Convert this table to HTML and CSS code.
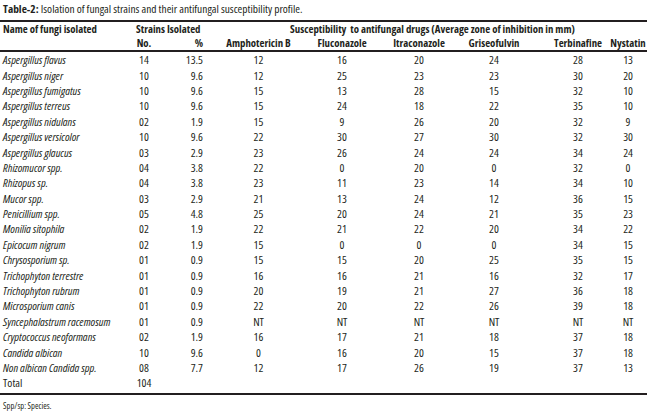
FILE: index.html
```html
<!DOCTYPE html>
<html>
<head>
<meta charset="utf-8">
<link rel="stylesheet" href="styles.css">
</head>
<body>
<p class="caption"><b>Table-2:</b> Isolation of fungal strains and their antifungal susceptibility profile.</p>
<table class="data">
<colgroup>
<col class="c-name"><col class="c-no"><col class="c-pct"><col class="c-amp"><col class="c-flu"><col class="c-itr"><col class="c-gri"><col class="c-ter"><col class="c-nys">
</colgroup>
<thead>
<tr class="h1">
<th class="name">Name of fungi isolated</th>
<th colspan="2" class="strains">Strains Isolated</th>
<th colspan="6" class="susc">Susceptibility&nbsp; to antifungal drugs (Average zone of inhibition in mm)</th>
</tr>
<tr class="h2">
<th></th>
<th>No.</th>
<th class="pct">%</th>
<th>Amphotericin B</th>
<th>Fluconazole</th>
<th>Itraconazole</th>
<th>Griseofulvin</th>
<th class="ter">Terbinafine</th>
<th>Nystatin</th>
</tr>
</thead>
<tbody>
<tr><td class="name">Aspergillus flavus</td><td>14</td><td class="pct">13.5</td><td>12</td><td>16</td><td>20</td><td>24</td><td class="ter">28</td><td>13</td></tr>
<tr><td class="name">Aspergillus niger</td><td>10</td><td class="pct">9.6</td><td>12</td><td>25</td><td>23</td><td>23</td><td class="ter">30</td><td>20</td></tr>
<tr><td class="name">Aspergillus fumigatus</td><td>10</td><td class="pct">9.6</td><td>15</td><td>13</td><td>28</td><td>15</td><td class="ter">32</td><td>10</td></tr>
<tr><td class="name">Aspergillus terreus</td><td>10</td><td class="pct">9.6</td><td>15</td><td>24</td><td>18</td><td>22</td><td class="ter">35</td><td>10</td></tr>
<tr><td class="name">Aspergillus nidulans</td><td>02</td><td class="pct">1.9</td><td>15</td><td>9</td><td>26</td><td>20</td><td class="ter">32</td><td>9</td></tr>
<tr><td class="name">Aspergillus versicolor</td><td>10</td><td class="pct">9.6</td><td>22</td><td>30</td><td>27</td><td>30</td><td class="ter">32</td><td>30</td></tr>
<tr><td class="name">Aspergillus glaucus</td><td>03</td><td class="pct">2.9</td><td>23</td><td>26</td><td>24</td><td>24</td><td class="ter">34</td><td>24</td></tr>
<tr><td class="name">Rhizomucor spp.</td><td>04</td><td class="pct">3.8</td><td>22</td><td>0</td><td>20</td><td>0</td><td class="ter">32</td><td>0</td></tr>
<tr><td class="name">Rhizopus sp.</td><td>04</td><td class="pct">3.8</td><td>23</td><td>11</td><td>23</td><td>14</td><td class="ter">34</td><td>10</td></tr>
<tr><td class="name">Mucor spp.</td><td>03</td><td class="pct">2.9</td><td>21</td><td>13</td><td>24</td><td>12</td><td class="ter">36</td><td>15</td></tr>
<tr><td class="name">Penicillium spp.</td><td>05</td><td class="pct">4.8</td><td>25</td><td>20</td><td>24</td><td>21</td><td class="ter">35</td><td>23</td></tr>
<tr><td class="name">Monilia sitophila</td><td>02</td><td class="pct">1.9</td><td>22</td><td>21</td><td>22</td><td>20</td><td class="ter">34</td><td>22</td></tr>
<tr><td class="name">Epicocum nigrum</td><td>02</td><td class="pct">1.9</td><td>15</td><td>0</td><td>0</td><td>0</td><td class="ter">34</td><td>15</td></tr>
<tr><td class="name">Chrysosporium sp.</td><td>01</td><td class="pct">0.9</td><td>15</td><td>15</td><td>20</td><td>25</td><td class="ter">35</td><td>15</td></tr>
<tr><td class="name">Trichophyton terrestre</td><td>01</td><td class="pct">0.9</td><td>16</td><td>16</td><td>21</td><td>16</td><td class="ter">32</td><td>17</td></tr>
<tr><td class="name">Trichophyton rubrum</td><td>01</td><td class="pct">0.9</td><td>20</td><td>19</td><td>21</td><td>27</td><td class="ter">36</td><td>18</td></tr>
<tr><td class="name">Microsporium canis</td><td>01</td><td class="pct">0.9</td><td>22</td><td>20</td><td>22</td><td>26</td><td class="ter">39</td><td>18</td></tr>
<tr><td class="name">Syncephalastrum racemosum</td><td>01</td><td class="pct">0.9</td><td>NT</td><td>NT</td><td>NT</td><td>NT</td><td class="ter">NT</td><td>NT</td></tr>
<tr><td class="name">Cryptococcus neoformans</td><td>02</td><td class="pct">1.9</td><td>16</td><td>17</td><td>21</td><td>18</td><td class="ter">37</td><td>18</td></tr>
<tr><td class="name">Candida albican</td><td>10</td><td class="pct">9.6</td><td>0</td><td>16</td><td>20</td><td>15</td><td class="ter">37</td><td>18</td></tr>
<tr><td class="name">Non albican Candida spp.</td><td>08</td><td class="pct">7.7</td><td>12</td><td>17</td><td>26</td><td>19</td><td class="ter">37</td><td>13</td></tr>
<tr class="total"><td class="name plain">Total</td><td>104</td><td class="pct"></td><td></td><td></td><td></td><td></td><td class="ter"></td><td></td></tr>
</tbody>
</table>
<p class="note">Spp/sp: Species.</p>
</body>
</html>
```
FILE: styles.css
```css
html, body {
  margin: 0;
  padding: 0;
  background: #ffffff;
}
body {
  font-family: "Open Sans", "Noto Sans", "DejaVu Sans Condensed", sans-serif;
  font-stretch: 75%;
  color: #231f20;
  font-size: 10px;
}
.caption {
  margin: 0;
  padding: 2px 0 0 3px;
  height: 15px;
  line-height: 13px;
  font-size: 11.4px;
}
.data {
  margin-top: 3px;
  width: 647px;
  border-collapse: collapse;
  table-layout: fixed;
}
.c-name { width: 120px; }
.c-no { width: 48px; }
.c-pct { width: 42px; }
.c-amp { width: 97px; }
.c-flu { width: 70px; }
.c-itr { width: 84px; }
.c-gri { width: 66px; }
.c-ter { width: 82px; }
.c-nys { width: 38px; }
.data th, .data td {
  padding: 0;
  text-align: center;
  white-space: nowrap;
}
.data th {
  font-weight: bold;
  font-size: 10.8px;
}
.data thead tr.h1 th {
  border-top: 2px solid #231f20;
  height: 14px;
  padding-top: 0;
  line-height: 14px;
  vertical-align: top;
}
.data thead tr.h2 th {
  height: 14px;
  line-height: 14px;
  padding-bottom: 0;
  vertical-align: bottom;
  border-bottom: 2px solid #231f20;
}
.data th.name { text-align: left; padding-left: 3px; }
.data th.strains { text-align: left; padding-left: 16px; }
.data th.susc { text-align: left; padding-left: 80px; }
.data td {
  height: 15.4px;
  line-height: 15px;
  font-size: 11.5px;
  font-stretch: 82%;
}
.data td.name {
  text-align: left;
  padding-left: 3px;
  font-style: italic;
}
.data td.name.plain { font-style: normal; }
.data .pct { text-align: right; padding-right: 7px; }
.data .ter { padding-left: 20px; }
.data tr.total td {
  border-bottom: 2px solid #231f20;
  padding-bottom: 2px;
}
.note {
  margin: 0;
  padding: 6px 0 0 3px;
  font-size: 8.5px;
  line-height: 10px;
  font-stretch: 82%;
}
```
